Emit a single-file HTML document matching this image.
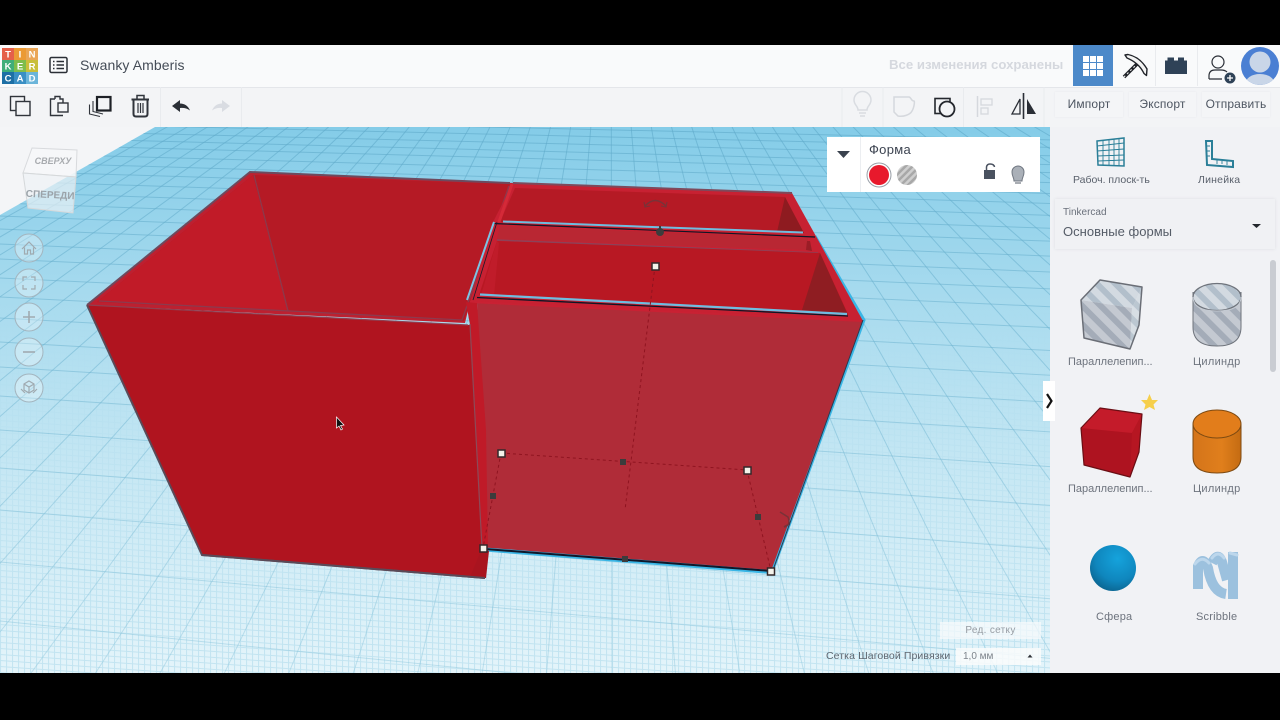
<!DOCTYPE html>
<html><head><meta charset="utf-8">
<style>
html,body{margin:0;padding:0;background:#000;width:1280px;height:720px;overflow:hidden}
#wrap{position:relative;width:1280px;height:720px;background:#000;overflow:hidden;font-family:"Liberation Sans","DejaVu Sans",sans-serif}
#canvas{position:absolute;left:0;top:127px;width:1050px;height:546px;background:#f4f5f7}
#head{position:absolute;left:0;top:45px;width:1280px;height:42px;background:#f9fafb}
#tool{position:absolute;left:0;top:87px;width:1280px;height:40px;background:#f3f4f6;box-shadow:inset 0 1px 0 #e4e6ea}
#side{position:absolute;left:1050px;top:127px;width:230px;height:546px;background:#f1f2f5}
svg{position:absolute;left:0;top:0}
.t{position:absolute;white-space:nowrap;line-height:1}
.btn{position:absolute;top:92px;height:25px;line-height:24px;text-align:center;font-size:12px;color:#4d5561;box-shadow:0 0 2px #e6e8ec;background:#f4f5f7;letter-spacing:.15px}
#panel{position:absolute;left:827px;top:137px;width:213px;height:55px;background:#fff}
#sel{position:absolute;left:1055px;top:199px;width:220px;height:50px;background:#f0f1f4;box-shadow:0 0 3px #dcdee3}
.lb{position:absolute;white-space:nowrap;line-height:1;font-size:11px;color:#6d737d;letter-spacing:.2px}
</style></head>
<body><div id="wrap">
<div id="canvas"></div><div id="head"></div><div id="tool"></div><div id="side"></div>

<svg width="1280" height="720" viewBox="0 0 1280 720" xmlns="http://www.w3.org/2000/svg">
<defs>
<clipPath id="cp"><polygon points="155,127 1050,127 1050,673 0,673 0,215"/></clipPath>
<clipPath id="av"><circle cx="1260" cy="66" r="19"/></clipPath>
<linearGradient id="wg" x1="0" y1="127" x2="0" y2="673" gradientUnits="userSpaceOnUse">
<stop offset="0" stop-color="#84cce8"/><stop offset=".3" stop-color="#a6daee"/><stop offset=".65" stop-color="#c8e8f4"/><stop offset="1" stop-color="#e4f4fa"/></linearGradient>
<linearGradient id="gl" x1="0" y1="127" x2="0" y2="673" gradientUnits="userSpaceOnUse">
<stop offset="0" stop-color="#5ea9c9" stop-opacity=".6"/><stop offset=".5" stop-color="#6fb4d0" stop-opacity=".5"/><stop offset="1" stop-color="#8cc6dc" stop-opacity=".45"/></linearGradient>
<pattern id="fine" width="6" height="6" patternUnits="userSpaceOnUse" patternTransform="skewY(4)">
<path d="M0 .5H6M.5 0V6" stroke="#a9d8ea" stroke-width="1" fill="none"/></pattern>
<linearGradient id="fm" x1="0" y1="300" x2="0" y2="620" gradientUnits="userSpaceOnUse"><stop offset="0" stop-color="#000"/><stop offset="1" stop-color="#fff"/></linearGradient>
<mask id="fmask" maskUnits="userSpaceOnUse" x="0" y="127" width="1050" height="546"><rect x="0" y="127" width="1050" height="546" fill="url(#fm)"/></mask>
<pattern id="hatch" width="13" height="13" patternUnits="userSpaceOnUse" patternTransform="rotate(-45)">
<rect width="13" height="13" fill="#c4c9d1"/><rect width="6" height="13" fill="#a4acb8"/></pattern>
<pattern id="hatchT" width="13" height="13" patternUnits="userSpaceOnUse" patternTransform="rotate(-45)">
<rect width="13" height="13" fill="#d3dae1"/><rect width="6" height="13" fill="#b2bfcb"/></pattern>
<pattern id="hatch2" width="5" height="5" patternUnits="userSpaceOnUse" patternTransform="rotate(45)">
<rect width="5" height="5" fill="#cfcfcf"/><rect width="2.5" height="5" fill="#a8a8a8"/></pattern>
<linearGradient id="cylG" x1="0" x2="1" y1="0" y2="0"><stop offset="0" stop-color="#d4741a"/><stop offset=".6" stop-color="#e07f1c"/><stop offset="1" stop-color="#c46b12"/></linearGradient>
<radialGradient id="sph" cx=".6" cy=".3" r=".8"><stop offset="0" stop-color="#15a3dc"/><stop offset=".6" stop-color="#0f86bd"/><stop offset="1" stop-color="#0a5d86"/></radialGradient>
</defs>

<!-- workplane -->
<g clip-path="url(#cp)">
<rect x="0" y="127" width="1050" height="546" fill="url(#wg)"/>
<rect x="0" y="127" width="1050" height="546" fill="url(#fine)" mask="url(#fmask)" opacity=".55"/>
<path stroke="url(#gl)" stroke-width="1" fill="none" d="M0 116L1100 141M0 122.500L1100 148.600M0 130L1100 157M0 137L1100 166M0 144L1100 174M0 153L1100 184M0 162L1100 195M0 171L1100 205M0 181L1100 217M0 192L1100 230M0 203L1100 243M0 216L1100 258M0 229L1100 274M0 244L1100 291M0 259L1100 309M0 278L1100 330M0 297L1100 353M0 318L1100 378M0 342L1100 405M0 367L1100 435M0 396L1100 470M0 430L1100 509M0 468L1100 553M0 510L1100 603M0 562L1100 663M0 621L1100 733"/>
<path stroke="url(#gl)" stroke-width="1" fill="none" d="M611 -122L-884 680M611 -122L-819 680M611 -122L-754 680M611 -122L-689 680M611 -122L-624 680M611 -122L-559 680M611 -122L-494 680M611 -122L-429 680M611 -122L-364 680M611 -122L-299 680M611 -122L-234 680M611 -122L-169 680M611 -122L-104 680M611 -122L-39 680M611 -122L26 680M611 -122L91 680M611 -122L156 680M611 -122L221 680M611 -122L286 680M611 -122L351 680M611 -122L416 680M611 -122L481 680M611 -122L546 680M611 -122L612 680M611 -122L676 680M611 -122L741 680M611 -122L806 680M611 -122L871 680M611 -122L936 680M611 -122L1001 680M611 -122L1066 680M611 -122L1131 680M611 -122L1196 680M611 -122L1261 680M611 -122L1326 680M611 -122L1391 680M611 -122L1456 680M611 -122L1521 680M611 -122L1586 680M611 -122L1651 680M611 -122L1716 680M611 -122L1781 680M611 -122L1846 680M611 -122L1911 680M611 -122L1976 680M611 -122L2041 680M611 -122L2106 680"/>
</g>

<!-- nav cube -->
<g>
<polygon points="32,148 77,150 76,177 23,173" fill="#f6f7f8" fill-opacity=".9" stroke="#d8dadd"/>
<polygon points="23,173 76,177 73,213 28,208" fill="#eef2f4" fill-opacity=".68" stroke="#d5d8da"/>
<text x="53" y="164" font-size="9" font-weight="bold" font-style="italic" fill="#a8abaf" text-anchor="middle" font-family="Liberation Sans,sans-serif">СВЕРХУ</text>
<text x="50" y="198" font-size="10" font-weight="bold" fill="#9ba3a9" text-anchor="middle" font-family="Liberation Sans,sans-serif" transform="rotate(3 50 198)">СПЕРЕДИ</text>
</g>

<!-- nav buttons -->
<g fill="#ffffff" fill-opacity=".3" stroke="#a3b5bf" stroke-width="1">
<circle cx="29" cy="248" r="14"/><circle cx="29" cy="283" r="14"/><circle cx="29" cy="317" r="14"/><circle cx="29" cy="352" r="14"/><circle cx="29" cy="388" r="14"/>
</g>
<g fill="none" stroke="#a0aab0" stroke-width="1.200">
<path d="M22 249L29 242L36 249M24.500 247.500V254H27.500V250H30.500V254H33.500V247.500"/>
<path d="M23 281V277H27M31 277H35V281M35 285V289H31M27 289H23V285"/>
<path d="M23 317H35M29 311V323" stroke-width="1.600"/>
<path d="M23 352H35" stroke-width="1.600"/>
<path d="M29 381L34 384V390L29 393L24 390V384ZM24 384L29 387L34 384M29 387V393M21 389L25 393M37 389L33 393"/>
</g>

<!-- LEFT BOX -->
<polygon points="87,305 250,172 513,183 470,302 465,323" fill="#bd2030"/>
<polygon points="97,302 253,175 288,311" fill="#c11b28"/>
<polygon points="253,175 510,184 464,321 288,311 97,302" fill="#b51a25"/>
<polygon points="97,302 253,175 288,311" fill="#c11b28"/>
<path d="M254 175L288 311" stroke="#8b3a4c" stroke-width="1.300"/>
<path d="M99 301L462 320L509 186" fill="none" stroke="#8c3a4e" stroke-width="1.300"/>
<path d="M87 305L250 172L510 183" fill="none" stroke="#6d4a5e" stroke-width="2"/>
<polygon points="87,305 470,325 486,578 202,555" fill="#b0141f"/>
<path d="M87 305L468 325" stroke="#8f3f50" stroke-width="1.200"/>
<path d="M87 305L202 555L485 578" fill="none" stroke="#5a4a58" stroke-width="2"/>

<!-- RIGHT BOX -->
<path d="M815 236L864 320L772 572" fill="none" stroke="#39b6e6" stroke-width="3"/>
<polygon points="513,183 792,193 863,321 470,302 492,224" fill="#c72132"/>
<polygon points="515,188 785,197 803,233 500,222" fill="#b51a25"/>
<polygon points="785,197 804,233 777,232" fill="#8e1b20"/>
<path d="M513 183L792 193" stroke="#7d4a5c" stroke-width="2"/>
<path d="M512 184L499 222" stroke="#d42a38" stroke-width="3"/>
<polygon points="500,226 808,238 807,250 497,239" fill="#b92733"/>
<polygon points="807,241 810,241 812,251 806,250" fill="#9a1d26"/>
<path d="M497 240L818 253" stroke="#8c4258" stroke-width="1.500"/>
<polygon points="497,241 820,253 848,314 479,295" fill="#b81823"/>
<polygon points="497,241 481,295 494,296 499,243" fill="#c01c2a"/>
<polygon points="820,253 848,315 802,310" fill="#8f1d22"/>
<polygon points="477,303 863,321 771,571 486,548" fill="#b02c38"/>
<path d="M470 302L863 321" stroke="#c92133" stroke-width="2"/>
<path d="M493 223.500L815 237" stroke="#0e1626" stroke-width="1.200"/>
<path d="M503 221.500L803 232.500" stroke="#6fbde0" stroke-width="2"/>
<path d="M477 297.500L848 316" stroke="#0e1626" stroke-width="1.300"/>
<path d="M480 294.500L847 314" stroke="#6fbde0" stroke-width="2.200"/>
<path d="M494 222L467 300" stroke="#7cc4e4" stroke-width="2"/>
<path d="M497 222L473 300" stroke="#1a1a2a" stroke-width=".8"/>
<path d="M485 549.500L771 572" stroke="#39b6e6" stroke-width="4"/>
<path d="M485 549L771 571" stroke="#10182a" stroke-width="2"/>
<path d="M773 570L863 320" stroke="#2a3a50" stroke-width="1"/>
<!-- seam strip between boxes -->
<polygon points="466,302 477,303 486,430 488,548 482,548 470,325" fill="#c01a28"/>
<polygon points="482,548 489,551 486,578 470,577" fill="#a9141f"/>
<path d="M470 324L482 548" stroke="#8c4a58" stroke-width="1.200"/>
<path d="M485 578L202 555" stroke="#5a4a58" stroke-width="2"/>

<!-- dashed transform box -->
<g fill="none" stroke="#8f1420" stroke-width="1" stroke-dasharray="3 3">
<path d="M501 453L747 470M655 266L625 510M501 453L483 548M747 470L771 571"/>
</g>
<g fill="#3c3c3c">
<circle cx="660" cy="232" r="4"/><rect x="659" y="226" width="2" height="4"/>
<rect x="620" y="459" width="6" height="6"/><rect x="490" y="493" width="6" height="6"/><rect x="755" y="514" width="6" height="6"/><rect x="622" y="556" width="6" height="6"/>
</g>
<g fill="#f4f2ea" stroke="#33282a" stroke-width="1.500">
<rect x="652" y="263" width="7" height="7"/><rect x="498" y="450" width="7" height="7"/><rect x="744" y="467" width="7" height="7"/><rect x="480" y="545" width="7" height="7"/><rect x="767.500" y="568" width="7" height="7"/>
</g>
<g fill="none" stroke="#7a3238" stroke-width="1.500">
<path d="M645 206Q655 195 666 206"/><path d="M644 202L645 207L650 206M667 202L666 207L661 206" stroke-width="1.100"/>
<path d="M780 512L788 517Q790 522 788 525"/><path d="M784 527L788 525" stroke-width="2"/>
</g>
<!-- cursor -->
<path d="M336.500 417V428L339 426L341 430L342.500 429L340.500 425.500L344 425Z" fill="#111" stroke="#fff" stroke-width=".7"/>

<!-- logo -->
<g font-family="Liberation Sans,sans-serif" font-size="9.500" font-weight="bold" fill="#fff" text-anchor="middle">
<rect x="2" y="48" width="12" height="12" fill="#e5604a"/><rect x="14" y="48" width="12" height="12" fill="#eb9a35"/><rect x="26" y="48" width="12" height="12" fill="#eaa657"/>
<rect x="2" y="60" width="12" height="12" fill="#3fae7a"/><rect x="14" y="60" width="12" height="12" fill="#7dbd4c"/><rect x="26" y="60" width="12" height="12" fill="#c9bf3a"/>
<rect x="2" y="72" width="12" height="12" fill="#1d6fa5"/><rect x="14" y="72" width="12" height="12" fill="#3a8fc4"/><rect x="26" y="72" width="12" height="12" fill="#6bb5da"/>
<text x="8" y="57.500">T</text><text x="20" y="57.500">I</text><text x="32" y="57.500">N</text>
<text x="8" y="69.500">K</text><text x="20" y="69.500">E</text><text x="32" y="69.500">R</text>
<text x="8" y="81.500">C</text><text x="20" y="81.500">A</text><text x="32" y="81.500">D</text>
</g>
<!-- list icon -->
<rect x="50" y="57.500" width="17" height="15" rx="1.500" fill="none" stroke="#2b2f36" stroke-width="1.500"/>
<path d="M53 61.500H54.500M56.500 61.500H64M53 65H54.500M56.500 65H64M53 68.500H54.500M56.500 68.500H64" stroke="#2b2f36" stroke-width="1.500"/>

<!-- toolbar left icons -->
<g fill="none" stroke="#30343b" stroke-width="1.400">
<rect x="10.500" y="96.500" width="14" height="14"/><rect x="16" y="101.500" width="14" height="14" fill="#f3f4f6"/>
<path d="M55 99V96.500H60V99H63V103M55 99H50.500V115.500H63"/><rect x="58" y="103" width="10" height="9" fill="#f3f4f6"/>
<path d="M89.500 104.500V114L100 116.500M93 101V111.500L103 114" stroke-width="1.100"/><rect x="97" y="97" width="13.500" height="13.500" fill="#f3f4f6" stroke-width="2.200" stroke="#1d2026"/>
<path d="M131.500 99.500H149" stroke-width="2"/><path d="M137 98.500V95.500H144V98.500" stroke-width="1.500"/><path d="M133.500 100V114Q133.500 116.500 136 116.500H145Q147.500 116.500 147.500 114V100" stroke-width="2"/><path d="M138 103V113M140.500 103V113M143 103V113" stroke-width="1.200"/>
</g>
<path d="M172 106L180 100V103.500Q187 103.500 190 110.500Q186 107.500 180 108V112Z" fill="#2b2f36"/>
<path d="M230 106L222 100V103.500Q215 103.500 212 110.500Q216 107.500 222 108V112Z" fill="#d9dce2"/>
<path d="M160.500 87V127M241.500 87V127M842 87V127M883 87V127M963.500 87V127M1044 87V127M1155.500 45V86M1197.500 45V86" stroke="#e9ebee" stroke-width="1"/>

<!-- toolbar right icons -->
<g fill="none">
<path d="M858 110C858 106 854 105 854 100A8.500 8.500 0 0 1 871 100C871 105 867 106 867 110ZM859 113H866M860 116H865" stroke="#d9dce1" stroke-width="1.500"/>
<path d="M894 97H909C911 97 911 101 914 101C915 101 914 108 912 111C910 115 903 117 898 116L894 112Z" stroke="#d5d8dd" stroke-width="1.500"/>
<rect x="935" y="98.500" width="15" height="15" stroke="#24272d" stroke-width="1.600"/><circle cx="947" cy="109" r="7.500" stroke="#24272d" stroke-width="1.800" fill="#f3f4f6"/>
<path d="M977.500 96V117" stroke="#d5d8dd" stroke-width="1.500"/><rect x="981" y="99" width="11" height="6" stroke="#d5d8dd" stroke-width="1.300"/><rect x="981" y="108" width="7" height="6" stroke="#d5d8dd" stroke-width="1.300"/>
<path d="M1023.500 93V119" stroke="#2a2e36" stroke-width="1.600"/>
<path d="M1020 99L1012 114H1020Z" stroke="#2a2e36" stroke-width="1.300"/><path d="M1027 99L1036 114H1027Z" fill="#2a2e36"/>
</g>

<!-- header right -->
<rect x="1073" y="45" width="40" height="41" fill="#4c89c9"/>
<g fill="#fff"><rect x="1083" y="56" width="6" height="6"/><rect x="1090" y="56" width="6" height="6"/><rect x="1097" y="56" width="6" height="6"/><rect x="1083" y="63" width="6" height="6"/><rect x="1090" y="63" width="6" height="6"/><rect x="1097" y="63" width="6" height="6"/><rect x="1083" y="70" width="6" height="6"/><rect x="1090" y="70" width="6" height="6"/><rect x="1097" y="70" width="6" height="6"/></g>
<path d="M1138 63L1124 77" stroke="#1f2228" stroke-width="3.500"/>
<path d="M1138 63L1124 77" stroke="#e8e8e8" stroke-width="1.100" stroke-dasharray="2 2.500"/>
<path d="M1125 55L1128 54.500Q1140 57 1147 69L1146.500 75.500L1144 73.500Q1139 63 1127 58Z" fill="#f4f4f4" stroke="#1f2228" stroke-width="1.400" stroke-linejoin="round"/>
<path d="M1165 60.500H1167.500V57.500H1174V60.500H1178V57.500H1184V60.500H1187V74H1165Z" fill="#2f4257"/>
<g fill="none" stroke="#2a2e36" stroke-width="1.200"><circle cx="1218" cy="62" r="6"/><path d="M1209 79V76Q1209 70 1215 70H1221Q1225 70 1227 72M1209 79H1222"/></g>
<circle cx="1230" cy="78" r="5.500" fill="#2f4257"/><path d="M1227 78H1233M1230 75V81" stroke="#fff" stroke-width="1.300"/>
<circle cx="1260" cy="66" r="19" fill="#4a7fd3"/>
<g clip-path="url(#av)">
<circle cx="1260" cy="62" r="10.500" fill="#c9d6e8"/>
<path d="M1243 88Q1246 74 1260 74Q1274 74 1277 88Z" fill="#c9d6e8"/>
</g>

<!-- side panel icons -->
<g fill="none" stroke="#2a7f98">
<polygon points="1097,141 1124,138 1124,166 1098,165" stroke-width="1.500"/>
<path d="M1097 146L1124 143M1097 151L1124 149M1097 156L1124 155M1098 161L1124 160M1103 140.500V165.500M1109 140V165.500M1114 139V166M1119 139V166" stroke-width=".9"/>
<path d="M1206 141H1212V159L1233 161V167L1207 165Z" stroke-width="2"/>
<path d="M1206 146H1210M1206 151H1210M1207 156H1210M1217 160V164M1222 161V164M1227 161V165" stroke-width=".9"/>
</g>

<!-- shapes -->
<g stroke-linejoin="round">
<polygon points="1100,280 1142,287 1132,308 1081,300" fill="url(#hatchT)"/>
<polygon points="1081,300 1132,308 1130,349 1084,338" fill="url(#hatch)"/>
<polygon points="1132,308 1142,287 1139,325 1130,349" fill="url(#hatchT)" fill-opacity=".85"/>
<polygon points="1100,280 1142,287 1139,325 1130,349 1084,338 1081,300" fill="none" stroke="#6a6e76" stroke-width="1.500"/>
<path d="M1193 292V327Q1193 346 1217 346Q1241 346 1241 327V292" fill="url(#hatch)" stroke="#6f747c" stroke-width="1"/>
<ellipse cx="1217" cy="297" rx="24" ry="13.500" fill="url(#hatchT)" stroke="#6f747c" stroke-width="1.300"/>
<path d="M1193 297Q1193 311 1217 311Q1241 311 1241 297" fill="none" stroke="#c4cad2" stroke-width="1"/>
</g>
<g stroke-linejoin="round">
<polygon points="1100,408 1142,414 1139,452 1130,477 1084,465 1081,428" fill="#ae1320"/>
<polygon points="1100,408 1142,414 1132,433 1081,428" fill="#c41b2a"/>
<polygon points="1132,433 1142,414 1139,452 1130,477" fill="#b61622"/>
<polygon points="1100,408 1142,414 1139,452 1130,477 1084,465 1081,428" fill="none" stroke="#6a0e14" stroke-width="1.200"/>
</g>
<polygon points="1149.500,394 1152,400 1158,400 1153.500,404.500 1155,410 1149.500,407 1144,410 1145.500,404.500 1141,400 1147,400" fill="#f6cf4b"/>
<path d="M1193 424V457Q1193 473 1217 473Q1241 473 1241 457V424" fill="url(#cylG)" stroke="#7d4a12" stroke-width="1"/>
<ellipse cx="1217" cy="424" rx="24" ry="14" fill="#e27d1b" stroke="#7d4a12" stroke-width="1"/>
<circle cx="1113" cy="568" r="23" fill="url(#sph)"/>
<g fill="none" stroke="#9cc1de" stroke-width="10" stroke-linecap="butt">
<path d="M1198 589V566Q1203 555 1208 568Q1212 592 1226 594"/>
<path d="M1212 563Q1218 551 1222 562L1227 580"/>
<path d="M1233 552V599"/>
</g>
<g fill="none" stroke="#bdd7ec" stroke-width="3" stroke-linecap="round">
<path d="M1195 564Q1202 555 1209 563M1212 558Q1218 550 1224 558M1230 553L1237 555"/>
</g>

<!-- panel scrollbar -->
<rect x="1270" y="260" width="6" height="112" rx="3" fill="#c9ccd2"/>
<!-- toggle -->
<path d="M1043 381H1055V421H1043Z" fill="#fff"/>
<path d="M1047 394L1051.500 401L1047 408" fill="none" stroke="#111" stroke-width="2.200"/>
</svg>

<!-- text -->
<div class="t" style="left:80px;top:58px;font-size:14px;color:#454c57;letter-spacing:.08px">Swanky Amberis</div>
<div class="t" style="left:889px;top:58px;font-size:13.200px;font-weight:bold;color:#d5d8de">Все изменения сохранены</div>
<div class="btn" style="left:1055px;width:68px">Импорт</div>
<div class="btn" style="left:1129px;width:67px">Экспорт</div>
<div class="btn" style="left:1202px;width:68px">Отправить</div>

<div id="panel">
<svg width="213" height="55" viewBox="0 0 213 55">
<path d="M33.500 0V55" stroke="#eceef1"/>
<path d="M10 14H23L16.500 21Z" fill="#3a424e"/>
<circle cx="52" cy="38" r="12" fill="#fff" stroke="#9aa0a8"/>
<circle cx="52" cy="38" r="10" fill="#e8192c"/>
<circle cx="80" cy="38" r="10" fill="url(#hatch2)"/>
<rect x="157" y="33" width="11" height="9" fill="#4a5260"/>
<path d="M159.500 33V30Q160 27 163 27Q167 27 167.500 30" fill="none" stroke="#4a5260" stroke-width="1.500"/>
<path d="M187 44C187 40 185 40 185 35A6 6 0 0 1 197 35C197 40 195 40 195 44Z" fill="#aab0b8" stroke="#6f7680"/><path d="M188 46H194" stroke="#6f7680" stroke-width="1.200"/>
</svg>
<div class="t" style="left:42px;top:6px;font-size:13px;color:#3c4350;letter-spacing:.3px">Форма</div>
</div>

<div class="t" style="left:1073px;top:175px;font-size:10.500px;color:#5a616c">Рабоч. плоск-ть</div>
<div class="t" style="left:1198px;top:175px;font-size:10.500px;color:#5a616c;letter-spacing:.2px">Линейка</div>

<div id="sel">
<div class="t" style="left:8px;top:8.500px;font-size:10px;color:#6a707b">Tinkercad</div>
<div class="t" style="left:8px;top:26px;font-size:13px;color:#555c67;letter-spacing:.02px">Основные формы</div>
<svg width="220" height="50" viewBox="0 0 220 50"><path d="M197 25H206L201.500 29Z" fill="#22262c"/></svg>
</div>

<div class="lb" style="left:1068px;top:357px;letter-spacing:0">Параллелепип...</div>
<div class="lb" style="left:1193px;top:357px;letter-spacing:.3px">Цилиндр</div>
<div class="lb" style="left:1068px;top:484px;letter-spacing:0">Параллелепип...</div>
<div class="lb" style="left:1193px;top:484px;letter-spacing:.3px">Цилиндр</div>
<div class="lb" style="left:1096px;top:612px">Сфера</div>
<div class="lb" style="left:1196px;top:612px">Scribble</div>

<!-- bottom controls -->
<div class="t" style="left:940px;top:622px;width:101px;height:17px;background:rgba(250,251,252,.7);line-height:17px;text-align:center;font-size:10px;color:#969ca3;letter-spacing:.3px">Ред. сетку</div>
<div class="t" style="left:826px;top:651px;font-size:10.500px;color:#5e6670;letter-spacing:.1px">Сетка Шаговой Привязки</div>
<div class="t" style="left:956px;top:648px;width:85px;height:17px;background:rgba(250,251,252,.85);line-height:17px;font-size:10px;color:#7d848c;text-indent:7px">1,0 мм</div>
<svg width="1280" height="720" viewBox="0 0 1280 720"><path d="M1027.500 657.500H1032.500L1030 654.500Z" fill="#2c3036"/></svg>
</div></body></html>
